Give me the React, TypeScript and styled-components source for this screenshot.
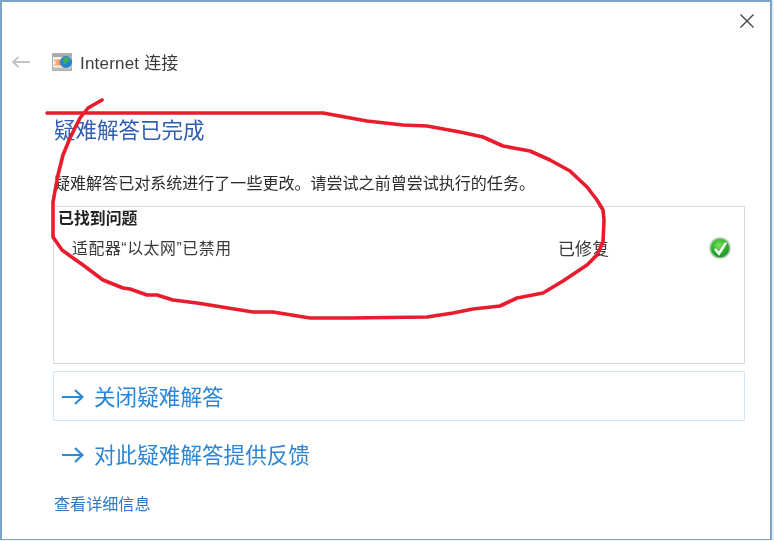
import styled, { createGlobalStyle } from "styled-components";

const Global = createGlobalStyle`
  html, body {
    margin: 0;
    padding: 0;
    background: #f0f0f0;
  }
`;

const Screen = styled.div`
  position: relative;
  width: 774px;
  height: 541px;
  overflow: hidden;
  background: #eef0f2;
  font-family: "Noto Sans CJK SC", "Liberation Sans", sans-serif;
  filter: blur(0.5px);
`;

const Dialog = styled.div`
  box-sizing: border-box;
  width: 772px;
  height: 540px;
  background: #fff;
  border: solid #7ba4c8;
  border-width: 2px 2px 1px 2px;
  display: flex;
  flex-direction: column;
  padding: 0 25px 0 51px;
`;

const CloseRow = styled.div`
  display: flex;
  justify-content: flex-end;
  height: 36px;
  margin-right: -25px;
  padding: 12px 16px 0 0;
  box-sizing: border-box;
`;

const Header = styled.div`
  display: flex;
  align-items: center;
  height: 48px;
  margin-left: -41px;
`;

const BackIcon = styled.svg`
  width: 18px;
  height: 12px;
  margin-right: 22px;
`;

const AppName = styled.span`
  font-family: "Liberation Sans", "Noto Sans CJK SC", sans-serif;
  font-size: 17px;
  color: #3c3c3c;
  margin-left: 8px;
  letter-spacing: 0.2px;
  padding-bottom: 2px;
`;

const Title = styled.h1`
  margin: 13px 0 0 1px;
  height: 48px;
  line-height: 48px;
  padding-top: 6px;
  box-sizing: border-box;
  font-size: 21.5px;
  font-weight: 400;
  color: #2f5fb3;
  white-space: nowrap;
`;

const Message = styled.p`
  margin: 23px 0 0 1px;
  height: 24px;
  line-height: 24px;
  font-size: 16.05px;
  color: #2c2c2c;
  white-space: nowrap;
`;

const ResultBox = styled.section`
  box-sizing: border-box;
  height: 158px;
  margin-top: 12px;
  border: 1px solid #d9d9d9;
  padding: 0 0 0 4px;
`;

const BoxTitle = styled.div`
  font-size: 15.9px;
  font-weight: 700;
  line-height: 22px;
  color: #222;
`;

const ProblemRow = styled.div`
  display: grid;
  grid-template-columns: 486px 1fr 24px;
  align-items: center;
  height: 28px;
  margin-top: 5px;
  padding: 0 11px 0 14px;
  font-family: "Liberation Sans", "Noto Sans CJK SC", sans-serif;
  font-size: 15.9px;
  letter-spacing: 0.55px;
  color: #3a3a3a;
`;

const ProblemText = styled.span`
  padding-bottom: 2px;
`;

const StatusText = styled.span`
  font-size: 17px;
  letter-spacing: 0;
  white-space: nowrap;
  padding-bottom: 2px;
`;

const LinkBox = styled.a<{ $framed?: boolean }>`
  box-sizing: border-box;
  display: flex;
  align-items: center;
  height: 50px;
  margin-top: ${(p) => (p.$framed ? "7px" : "8px")};
  padding: 0 0 2px 8px;
  border: 1px solid ${(p) => (p.$framed ? "#d5e6f4" : "transparent")};
  color: #2b86d6;
  font-size: 21.6px;
  white-space: nowrap;
`;

const ArrowIcon = styled.svg`
  width: 22px;
  height: 16px;
  margin: 3px 10px 0 0;
`;

const Details = styled.a`
  margin: 12px 0 0 1px;
  line-height: 24px;
  font-size: 16.1px;
  color: #2f78c4;
`;

const Scribble = styled.svg`
  position: absolute;
  inset: 0;
  width: 774px;
  height: 541px;
  pointer-events: none;
`;

function Arrow() {
  return (
    <ArrowIcon viewBox="0 0 22 16" fill="none" stroke="#2b8ad8" strokeWidth="2.2">
      <path d="M0 8H20M13 1l7.5 7-7.5 7" />
    </ArrowIcon>
  );
}

function InternetIcon() {
  return (
    <svg width="20" height="18" viewBox="0 0 20 18">
      <defs>
        <linearGradient id="streak" x1="0" x2="1" y1="0" y2="0">
          <stop offset="0%" stopColor="#f6c9a2" />
          <stop offset="100%" stopColor="#ee7428" />
        </linearGradient>
      </defs>
      <rect x="0.5" y="0.5" width="19" height="17" fill="#f2f2f2" stroke="#b0b0b0" />
      <rect x="1" y="1" width="18" height="3" fill="#a9a9a9" />
      <rect x="1" y="14.5" width="18" height="2.5" fill="#bdbdbd" />
      <path d="M1 6.5h8l3 2.5-3 3.5H1l3-3z" fill="url(#streak)" />
      <circle cx="14" cy="9" r="6" fill="#1f86cf" />
      <path d="M11.5 4.5c3-1.5 6 0 6 2.5s-3 1-4 3.5-3.5-3.5-2-6z" fill="#3fae55" />
    </svg>
  );
}

function CheckBadge() {
  return (
    <svg width="22" height="22" viewBox="0 0 22 22">
      <defs>
        <radialGradient id="okGreen" cx="45%" cy="35%" r="70%">
          <stop offset="0%" stopColor="#7fe05a" />
          <stop offset="65%" stopColor="#22ad2a" />
          <stop offset="100%" stopColor="#1a8a28" />
        </radialGradient>
      </defs>
      <circle cx="11" cy="11" r="10.8" fill="#b7c8b4" />
      <circle cx="11" cy="11" r="9.2" fill="url(#okGreen)" />
      <path d="M6 12l4 4.7L17 5.6" fill="none" stroke="#fff" strokeWidth="2.5" />
    </svg>
  );
}

export default function App() {
  return (
    <Screen>
      <Global />
      <Dialog>
        <CloseRow>
          <svg width="14" height="14" viewBox="0 0 14 14" stroke="#444" strokeWidth="1.4">
            <path d="M0.5 0.5L13.5 13.5M13.5 0.5L0.5 13.5" />
          </svg>
        </CloseRow>
        <Header>
          <BackIcon viewBox="0 0 18 12" fill="none" stroke="#c2c2c2" strokeWidth="1.8">
            <path d="M18 6H1M6.5 0.8L1 6l5.5 5.2" />
          </BackIcon>
          <InternetIcon />
          <AppName>Internet 连接</AppName>
        </Header>
        <Title>疑难解答已完成</Title>
        <Message>疑难解答已对系统进行了一些更改。请尝试之前曾尝试执行的任务。</Message>
        <ResultBox>
          <BoxTitle>已找到问题</BoxTitle>
          <ProblemRow>
            <ProblemText>适配器“以太网”已禁用</ProblemText>
            <StatusText>已修复</StatusText>
            <CheckBadge />
          </ProblemRow>
        </ResultBox>
        <LinkBox $framed>
          <Arrow />
          关闭疑难解答
        </LinkBox>
        <LinkBox>
          <Arrow />
          对此疑难解答提供反馈
        </LinkBox>
        <Details>查看详细信息</Details>
      </Dialog>
      <Scribble viewBox="0 0 774 541" fill="none" stroke="#e81c2c" strokeWidth="3.6" strokeLinejoin="round" strokeLinecap="round">
        <path d="M47 113 L323 113 L367 121 L403 125 L427 126 L460 132 L483 137 L503 146 L530 151 L550 160 L570 171 L587 187 L597 200 L603 210 L604 220 L603 242 L597 255 L587 265 L563 281 L543 293 L517 298 L500 306 L473 309 L453 313 L427 317 L350 318 L310 318 L273 312 L253 312 L197 303 L173 300 L157 295 L147 295 L130 289 L123 288 L103 280 L83 265 L73 258 L62 250 L53 237 L53 202 L58 175 L63 155 L70 138 L80 118 L88 108 L102 100" />
      </Scribble>
    </Screen>
  );
}
